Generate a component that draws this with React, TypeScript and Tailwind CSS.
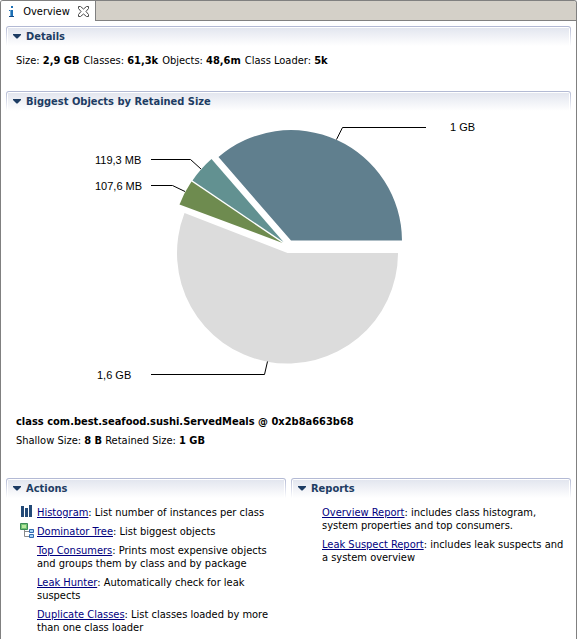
import { useState, type ReactNode } from "react";

type SectionProps = { title: string; children: ReactNode; className?: string };

function Section({ title, children, className = "" }: SectionProps) {
  const [open, setOpen] = useState(true);
  return (
    <section className={className}>
      <div className="rounded-t-[3px] bg-linear-to-b from-[#b1b8d3] to-white px-px pt-px">
        <div className="rounded-t-[2px] bg-white px-px pt-px">
          <h2 className="h-[18px] bg-linear-to-b from-[#e3e6ef] to-white">
            <button
              type="button"
              aria-expanded={open}
              onClick={() => setOpen(!open)}
              className="flex h-[17px] items-center gap-[5px] pl-[5px] text-[11px] leading-[17px] font-bold text-[#1d3c63]"
            >
              <svg width="8" height="5" viewBox="0 0 8 5" fill="currentColor" aria-hidden="true">
                <path d="M0 0h8v1L4.500 4.500h-1L0 1z" />
              </svg>
              {title}
            </button>
          </h2>
        </div>
      </div>
      {open && children}
    </section>
  );
}

function InfoIcon() {
  return (
    <svg width="6" height="11" viewBox="0 0 6 11" aria-hidden="true">
      <path d="M2 0h2v2H2zM0 4h4v1H0zM2 5h2v5H2z" fill="#1c6fb5" />
      <path d="M1 4h1v6H1z" fill="#6aa5d2" />
      <path d="M0 10h5v1H0z" fill="#134a86" />
    </svg>
  );
}

function CloseIcon() {
  return (
    <svg width="11" height="11" viewBox="0 0 11 11" fill="#fff" stroke="#4a4a4a" aria-hidden="true">
      <path d="M.5.5h2l3 2.500 3-2.500h2v2l-2.500 3 2.500 3v2h-2l-3-2.500-3 2.500h-2v-2l2.500-3-2.500-3z" />
    </svg>
  );
}

function HistogramIcon() {
  return (
    <svg width="16" height="16" viewBox="0 0 16 16" fill="#234a77" aria-hidden="true">
      <path d="M1 2h3v11H1zM5 4h3v9H5zM9 1h3v12H9z" />
    </svg>
  );
}

function TreeIcon() {
  return (
    <svg width="16" height="16" viewBox="0 0 16 16" fill="none" aria-hidden="true">
      <path d="M4.500 7v6.500H10M4.500 8.500H10" stroke="#8a8a8a" />
      <path d="M.5.5h7v6h-7z" fill="#72c472" stroke="#3d8b57" />
      <path d="M2 2h4v3H2z" fill="#b9e8a2" />
      <path d="M9.500 6.500h4v3h-4zM9.500 11.500h4v3h-4z" fill="#a5d3f7" stroke="#2f69b0" />
    </svg>
  );
}

function PieChart() {
  return (
    <svg
      viewBox="6 111 565 280"
      className="h-[280px] w-full font-['Liberation_Sans',Arial,sans-serif] text-[11px]"
      role="img"
      aria-label="Biggest objects by retained size"
    >
      <path d="M291 240.500H402A111 111 0 0 0 218.500 157z" fill="#607f8e" />
      <path d="M283.500 242L211.500 159A110 110 0 0 0 192.500 180.500z" fill="#629191" />
      <path d="M282.500 243L191.500 181.500A110 110 0 0 0 179.500 204.500z" fill="#6e8b4f" />
      <path d="M287.500 253H398A110.500 110.500 0 1 1 184.500 213z" fill="#dcdcdc" />
      <g fill="none" stroke="#000">
        <path d="M336.500 139.500L342.500 127.500H426" />
        <path d="M151 159.500H190.500L201 169" />
        <path d="M151 185.500H172.500L185 191.500" />
        <path d="M151 374.500H264.500L267.500 361.500" />
      </g>
      <g fill="#000">
        <text x="450" y="131">1 GB</text>
        <text x="95" y="164">119,3 MB</text>
        <text x="95" y="190">107,6 MB</text>
        <text x="97" y="379">1,6 GB</text>
      </g>
    </svg>
  );
}

type Entry = { name: string; text: string; icon?: ReactNode };

const actions: Entry[] = [
  { name: "Histogram", text: "List number of instances per class", icon: <HistogramIcon /> },
  { name: "Dominator Tree", text: "List biggest objects", icon: <TreeIcon /> },
  { name: "Top Consumers", text: "Prints most expensive objects and groups them by class and by package" },
  { name: "Leak Hunter", text: "Automatically check for leak suspects" },
  { name: "Duplicate Classes", text: "List classes loaded by more than one class loader" },
];

const reports: Entry[] = [
  { name: "Overview Report", text: "includes class histogram, system properties and top consumers." },
  { name: "Leak Suspect Report", text: "includes leak suspects and a system overview" },
];

function EntryList({ entries }: { entries: Entry[] }) {
  return (
    <ul className="mt-2 flex flex-col gap-1.5 pr-1 pl-3.5">
      {entries.map((e) => (
        <li key={e.name} className="flex gap-px">
          <span className="-my-0.5 h-4 w-4 shrink-0">{e.icon}</span>
          <p>
            <a href="#" className="text-[#000080] underline">
              {e.name}
            </a>
            : {e.text}
          </p>
        </li>
      ))}
    </ul>
  );
}

export default function App() {
  return (
    <div className="min-h-screen overflow-hidden rounded-t-[3px] border border-b-0 border-[#808080] bg-white font-['DejaVu_Sans_Condensed','DejaVu_Sans',Tahoma,sans-serif] text-[11px] leading-[13px] text-black">
      <div role="tablist" className="flex h-5 bg-[#d4d0c8]">
        <button
          type="button"
          role="tab"
          aria-selected="true"
          className="flex w-[95px] items-center justify-between border-r border-[#808080] bg-white pr-1.5 pl-2"
        >
          <InfoIcon />
          <span>Overview</span>
          <CloseIcon />
        </button>
        <div className="grow border-b border-[#808080]" />
      </div>
      <main className="px-[5px] pt-[5px]">
        <Section title="Details">
          <p className="mt-2 flex gap-1 pl-2.5">
            <span>Size: <b>2,9 GB</b></span>
            <span>Classes: <b>61,3k</b></span>
            <span>Objects: <b>48,6m</b></span>
            <span>Class Loader: <b>5k</b></span>
          </p>
        </Section>
        <Section title="Biggest Objects by Retained Size" className="mt-6">
          <PieChart />
          <div className="mt-6 flex flex-col gap-1.5 pl-2.5">
            <p className="font-bold">class com.best.seafood.sushi.ServedMeals @ 0x2b8a663b68</p>
            <p>
              Shallow Size: <b>8 B</b> Retained Size: <b>1 GB</b>
            </p>
          </div>
        </Section>
        <div className="mt-[31px] grid grid-cols-2 gap-[5px]">
          <Section title="Actions">
            <EntryList entries={actions} />
          </Section>
          <Section title="Reports">
            <EntryList entries={reports} />
          </Section>
        </div>
      </main>
    </div>
  );
}
